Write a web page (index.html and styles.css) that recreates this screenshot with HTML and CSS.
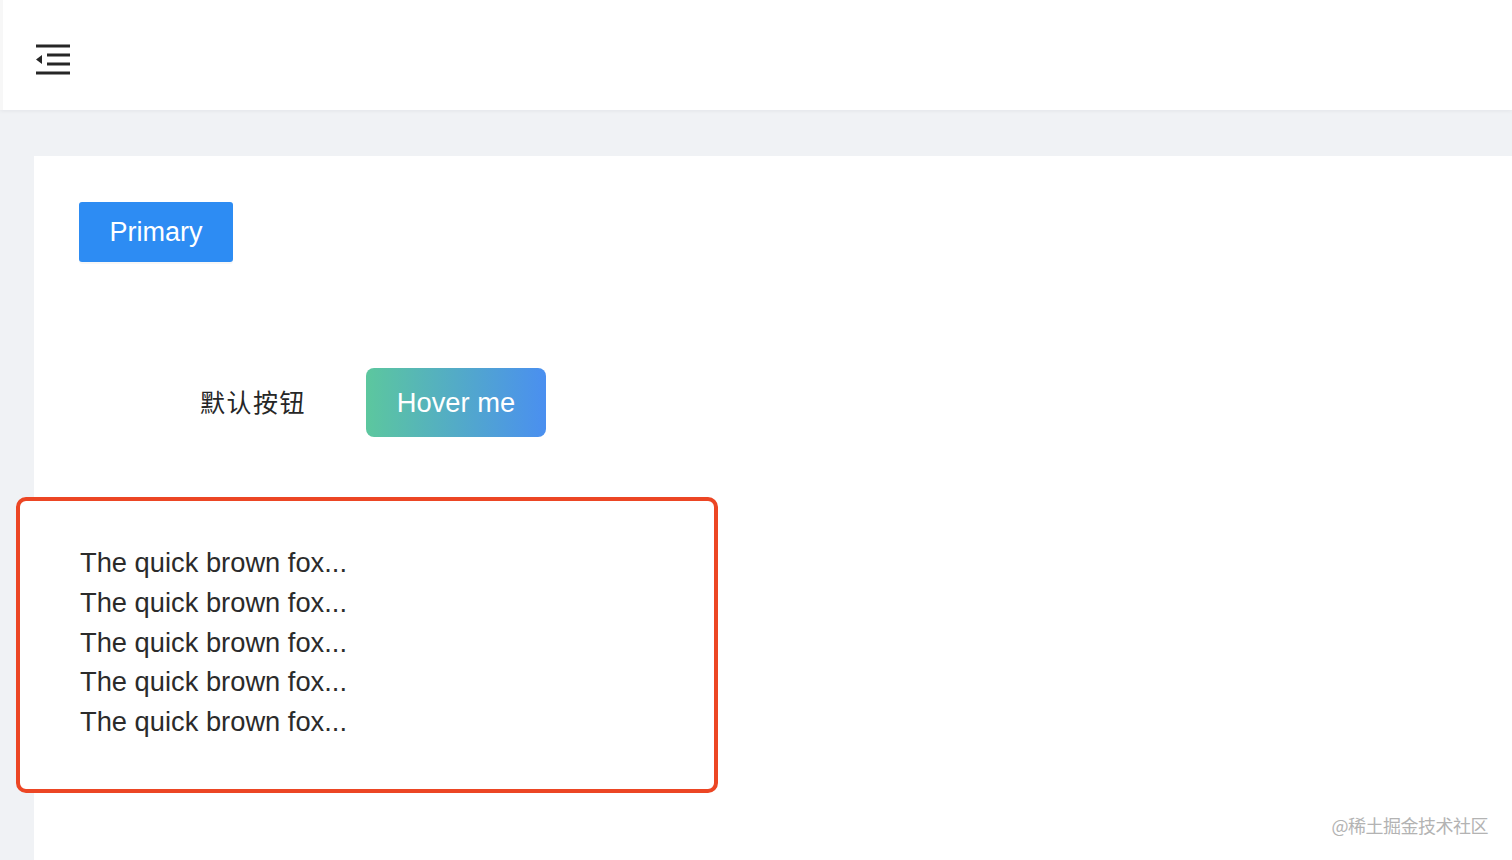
FILE: index.html
```html
<!DOCTYPE html>
<html lang="zh-CN">
<head>
<meta charset="utf-8">
<title>Demo</title>
<link rel="stylesheet" href="styles.css">
</head>
<body>
<div class="app">
  <header class="header">
    <button class="trigger" aria-label="收起菜单">
      <svg width="36" height="32" viewBox="0 0 36 32">
        <rect x="0" y="0.5" width="34" height="3" fill="#262626"/>
        <rect x="11" y="9.5" width="23" height="3" fill="#262626"/>
        <rect x="11" y="18.5" width="23" height="3" fill="#262626"/>
        <rect x="0" y="27.5" width="34" height="3" fill="#262626"/>
        <polygon points="0,15.5 6,11 6,20" fill="#262626"/>
      </svg>
    </button>
  </header>
  <main class="main">
    <section class="panel">
      <div class="row-primary">
        <button class="btn btn-primary">Primary</button>
      </div>
      <div class="row-buttons">
        <button class="btn btn-default">默认按钮</button>
        <button class="btn btn-gradient">Hover me</button>
      </div>
      <div class="outlined">
        <p class="line">The quick brown fox...</p>
        <p class="line">The quick brown fox...</p>
        <p class="line">The quick brown fox...</p>
        <p class="line">The quick brown fox...</p>
        <p class="line">The quick brown fox...</p>
      </div>
    </section>
    <div class="watermark">@稀土掘金技术社区</div>
  </main>
</div>
</body>
</html>
```

FILE: styles.css
```css
* { box-sizing: border-box; }
html, body {
  margin: 0;
  padding: 0;
  height: 860px;
  overflow: hidden;
}
body {
  font-family: "Liberation Sans", "Noto Sans CJK SC", sans-serif;
  color: #262626;
  background: #f0f2f5;
}
.app {
  display: flex;
  flex-direction: column;
  height: 860px;
}
.header {
  height: 110px;
  flex: none;
  background: #fff;
  display: flex;
  align-items: center;
  padding-left: 36px;
  box-shadow: 0 1px 4px rgba(0, 21, 41, 0.06);
  position: relative;
  z-index: 1;
  border-left: 3px solid #f7f7f7;
}
.trigger {
  border: 0;
  background: transparent;
  padding: 0;
  margin: 0 0 0 -3px;
  display: flex;
  margin-top: 9px;
  cursor: pointer;
}
.main {
  flex: 1;
  padding: 46px 0 0 34px;
  position: relative;
}
.panel {
  background: #fff;
  height: 100%;
  padding: 46px 45px 0 45px;
}
.btn {
  font-family: "Liberation Sans", "Noto Sans CJK SC", sans-serif;
  border: 0;
  cursor: pointer;
  margin: 0;
}
.row-primary {
  display: flex;
}
.btn-primary {
  width: 154px;
  height: 60px;
  background: #2d8cf3;
  color: #fff;
  font-size: 27px;
  border-radius: 3px;
  box-shadow: 0 2px 0 rgba(0, 0, 0, 0.03);
  padding: 0;
}
.row-buttons {
  display: flex;
  align-items: center;
  margin-top: 106px;
  padding-left: 121px;
  gap: 61px;
}
.btn-default {
  background: transparent;
  color: #262626;
  font-family: "Noto Sans CJK SC", sans-serif;
  font-size: 25px;
  padding: 0 0 4px 0;
  height: 69px;
  width: 105px;
  text-align: left;
  letter-spacing: 1.5px;
  white-space: nowrap;
}
.btn-gradient {
  width: 180px;
  height: 69px;
  border-radius: 8px;
  background: linear-gradient(90deg, #5cc79e 0%, #4a8ff0 100%);
  color: #fff;
  font-size: 27.3px;
  padding: 0;
}
.outlined {
  margin-top: 60px;
  margin-left: -63px;
  width: 702px;
  height: 296px;
  border: 4px solid #ec4624;
  border-radius: 10px;
  padding: 42px 0 0 60px;
  position: relative;
  background: #fff;
}
.line {
  margin: 0;
  font-size: 27.3px;
  line-height: 39.75px;
  color: #2b2b2b;
}
.watermark {
  position: absolute;
  right: 24px;
  bottom: 22px;
  font-family: "Noto Sans CJK SC", sans-serif;
  font-size: 18px;
  color: #b3b3b3;
  letter-spacing: -0.5px;
}
```
